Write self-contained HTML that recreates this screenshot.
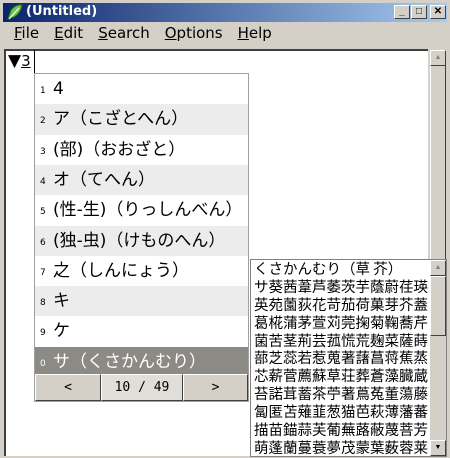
<!DOCTYPE html>
<html><head><meta charset="utf-8"><style>
*{margin:0;padding:0;box-sizing:border-box}
html{width:450px;height:458px;overflow:hidden}
body{width:450px;height:458px;background:#d4d0c8;position:relative;overflow:hidden;font-family:"Liberation Sans","Noto Sans CJK JP",sans-serif}
.a{position:absolute}
.title{left:3px;top:3px;width:444px;height:19px;background:linear-gradient(90deg,#0a246a,#a6caf0)}
.title span{position:absolute;left:23px;top:1px;color:#fff;font-weight:bold;font-size:13px;font-family:"DejaVu Sans",sans-serif}
.tb{top:5px;width:16px;height:14px;background:#d4d0c8;border:1px solid;border-color:#fff #404040 #404040 #fff;font-size:10px;text-align:center;line-height:12px;font-weight:bold}
.menu{top:24px;left:14px;font-size:15px;font-family:"DejaVu Sans",sans-serif}
.menu span{margin-right:15px}
.edit{left:4px;top:49px;width:424px;height:407px;background:#fff;border-left:2px solid #404040;border-top:2px solid #404040}
.sb{background:#d4d0c8;border:1px solid;border-color:#fff #404040 #404040 #fff}
.list{left:34px;top:73px;width:215px;height:329px;border:1px solid #a0a0a0;background:#fff}
.row{position:absolute;left:0;width:213px;height:30.3px;font-size:17px;line-height:30px;padding-left:5px;font-family:"DejaVu Sans","Noto Sans CJK JP",sans-serif}
.row i{font-style:normal;font-size:9px;display:inline-block;width:13px;vertical-align:1px}
.g{background:#ececec}
.sel{background:#8c8a84;color:#fff}
.nav{top:300px;height:27px;font-size:13px;line-height:25px;text-align:center;font-family:"DejaVu Sans Mono",monospace;background:#d4d0c8;border:1px solid;border-color:#fff #404040 #404040 #fff}
.kp{left:250px;top:259px;width:197px;height:198px;background:#fff;border:1px solid #808080;overflow:hidden}
.kp div{font-size:14.5px;height:17.9px;line-height:17.9px;padding-left:3px;white-space:nowrap;font-family:"Noto Sans CJK JP",sans-serif}
.arr{font-size:7px;color:#808080;text-align:center;line-height:14px}
</style></head><body>
<div class="a title"><svg class="a" style="left:3px;top:1px" width="17" height="17"><path d="M2 15 L5 6 Q10 0 16 1 Q15 9 8 13 Z" fill="#6cc44a" stroke="#2a6a20"/><path d="M3 15 L13 4" stroke="#fff" stroke-width="1"/></svg><span>(Untitled)</span></div>
<div class="a tb" style="left:394px">_</div>
<div class="a tb" style="left:411px">□</div>
<div class="a tb" style="left:430px">✕</div>
<div class="a menu"><span><u>F</u>ile</span><span><u>E</u>dit</span><span><u>S</u>earch</span><span><u>O</u>ptions</span><span><u>H</u>elp</span></div>
<div class="a edit"></div>
<div class="a" style="left:8px;top:51px;font-size:17px;font-family:'DejaVu Sans',sans-serif">▼<u style="font-size:15px">3</u></div>
<div class="a" style="left:34px;top:50px;width:1px;height:23px;background:#000"></div>
<div class="a sb" style="left:430px;top:50px;width:16px;height:406px"></div>
<div class="a sb arr" style="left:430px;top:50px;width:16px;height:16px">▲</div>
<div class="a list">
<div class="row" style="top:0"><i>1</i>4</div>
<div class="row g" style="top:30.3px"><i>2</i>ア（こざとへん）</div>
<div class="row" style="top:60.6px"><i>3</i>(部)（おおざと）</div>
<div class="row g" style="top:90.9px"><i>4</i>オ（てへん）</div>
<div class="row" style="top:121.2px"><i>5</i>(性-生)（りっしんべん）</div>
<div class="row g" style="top:151.5px"><i>6</i>(独-虫)（けものへん）</div>
<div class="row" style="top:181.8px"><i>7</i>之（しんにょう）</div>
<div class="row g" style="top:212.1px"><i>8</i>キ</div>
<div class="row" style="top:242.4px"><i>9</i>ケ</div>
<div class="row sel" style="top:272.7px"><i>0</i>サ（くさかんむり）</div>
<div class="a nav" style="left:0;width:66px">&lt;</div>
<div class="a nav" style="left:66px;width:82px;background:#e0ded8">10 / 49</div>
<div class="a nav" style="left:148px;width:65px">&gt;</div>
</div>
<div class="a kp">
<div>くさかんむり（草 芥）</div>
<div>サ葵茜葦芦萎茨芋蔭蔚荏瑛</div>
<div>英苑薗荻花苛茄荷菓芽芥蓋</div>
<div>葛椛蒲茅萱苅莞掬菊鞠蕎芹</div>
<div>菌苦茎荊芸菰慌荒麹菜薩蒔</div>
<div>蔀芝蕊若惹蒐著藷菖蒋蕉蒸</div>
<div>芯薪菅薦蘇草荘葬蒼藻臓蔵</div>
<div>苔諾茸蓄茶苧著蔦菟董蕩藤</div>
<div>匐匿苫薙韮葱猫芭萩薄藩蕃</div>
<div>描苗錨蒜芙葡蕪蕗蔽蔑菩芳</div>
<div>萌蓬蘭蔓蓑夢茂蒙葉薮蓉莱</div>
</div>
<div class="a sb" style="left:430px;top:260px;width:16px;height:196px;border-color:#d4d0c8"></div>
<div class="a sb arr" style="left:430px;top:260px;width:16px;height:16px">▲</div>
<div class="a sb" style="left:430px;top:276px;width:16px;height:60px"></div>
<div class="a sb arr" style="left:430px;top:440px;width:16px;height:16px;color:#000">▼</div>
</body></html>
